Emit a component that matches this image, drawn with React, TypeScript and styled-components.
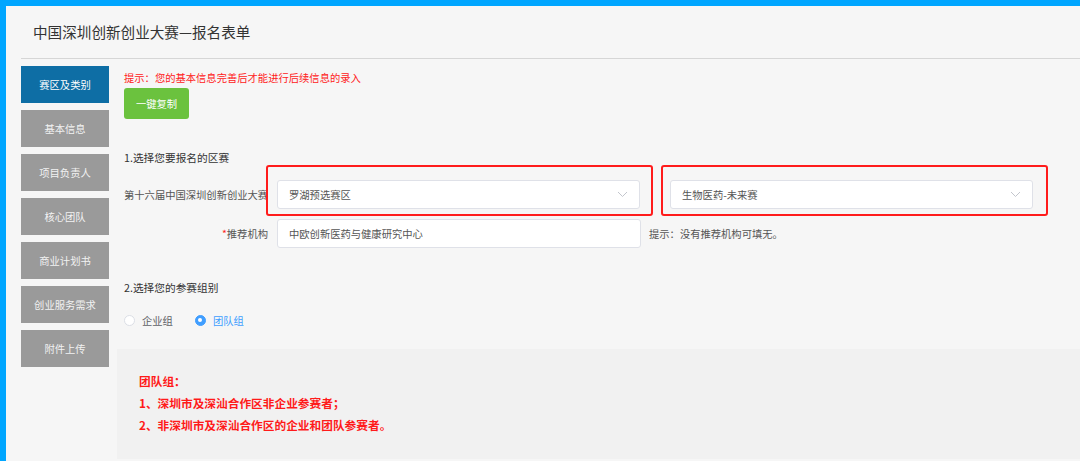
import React from "react";
import styled, { createGlobalStyle } from "styled-components";

const GlobalStyle = createGlobalStyle`
  html, body {
    margin: 0;
    padding: 0;
    background: #f6f6f6;
  }
  body {
    font-family: "Noto Sans CJK SC", "Noto Sans", "Liberation Sans", sans-serif;
  }
  * {
    box-sizing: border-box;
  }
`;

const Page = styled.div`
  width: 1080px;
  height: 461px;
  overflow: hidden;
  background: #f6f6f6;
  border-top: 6px solid #00a6ff;
  border-left: 6px solid #00a6ff;
`;

const Header = styled.div`
  height: 53px;
  margin-left: 15px;
  border-bottom: 1px solid #d6d6d6;
  display: flex;
  align-items: center;
  padding-left: 12px;
  padding-bottom: 1px;
`;

const Title = styled.h1`
  margin: 0;
  font-size: 14.6px;
  font-weight: 400;
  color: #333;
`;

const Body = styled.div`
  display: flex;
  padding-left: 15px;
  padding-top: 7px;
`;

const Sidebar = styled.nav`
  width: 88px;
  display: flex;
  flex-direction: column;
  gap: 7px;
  flex-shrink: 0;
`;

const SideItem = styled.div<{ $active?: boolean }>`
  height: 37px;
  display: flex;
  align-items: center;
  justify-content: center;
  font-size: 10.3px;
  color: ${(p) => (p.$active ? "#ffffff" : "#f2f2f2")};
  background: ${(p) => (p.$active ? "#0e6ea5" : "#9a9a9a")};
`;

const Main = styled.div`
  flex: 1;
  margin-left: 8px;
  display: flex;
  flex-direction: column;
`;

const Section = styled.div`
  padding-left: 7px;
  display: flex;
  flex-direction: column;
  align-items: flex-start;
`;

const Hint = styled.div`
  margin-top: 4px;
  font-size: 10.3px;
  line-height: 16px;
  color: #ff2020;
`;

const CopyButton = styled.button`
  margin-top: 2px;
  width: 65px;
  height: 31px;
  border: none;
  border-radius: 3px;
  background: #6bc23e;
  color: #fff;
  font-family: inherit;
  font-size: 10.3px;
  padding: 0;
`;

const StepTitle = styled.div<{ $top: number }>`
  margin-top: ${(p) => p.$top}px;
  font-size: 10.7px;
  line-height: 20px;
  color: #333;
`;

const Row = styled.div<{ $top: number }>`
  margin-top: ${(p) => p.$top}px;
  display: flex;
  align-items: center;
`;

const Label = styled.div`
  width: 153px;
  padding-right: 9px;
  text-align: right;
  font-size: 10.3px;
  color: #555;
  white-space: nowrap;
`;

const Star = styled.span`
  color: #ff2020;
`;

const Marked = styled.div<{ $right: number; $left: number }>`
  position: relative;
  &::after {
    content: "";
    position: absolute;
    top: -15px;
    bottom: -7px;
    left: -${(p) => p.$left}px;
    right: -${(p) => p.$right}px;
    border: 2.5px solid #ff1c1c;
    border-radius: 3px;
    pointer-events: none;
  }
`;

const Field = styled.div<{ $width: number }>`
  width: ${(p) => p.$width}px;
  height: 29px;
  background: #fff;
  border: 1px solid #dfe1e8;
  border-radius: 3px;
  display: flex;
  align-items: center;
  justify-content: space-between;
  padding: 0 11px 0 11px;
  font-size: 10.3px;
  color: #555;
`;

const Chevron = () => (
  <svg width="11" height="7" viewBox="0 0 11 7">
    <path d="M1 1l4.5 4.5L10 1" fill="none" stroke="#c3c6cd" strokeWidth="1" />
  </svg>
);

const Gap = styled.div<{ $w: number }>`
  width: ${(p) => p.$w}px;
`;

const Note = styled.div`
  margin-left: 8px;
  font-size: 10.3px;
  color: #555;
`;

const RadioGroup = styled.div`
  margin-top: 15px;
  display: flex;
  align-items: center;
  gap: 22px;
  height: 14px;
`;

const RadioOption = styled.label<{ $checked?: boolean }>`
  display: flex;
  align-items: center;
  gap: 7px;
  font-size: 10.3px;
  color: ${(p) => (p.$checked ? "#409eff" : "#606266")};
`;

const RadioDot = styled.span<{ $checked?: boolean }>`
  width: 11px;
  height: 11px;
  border-radius: 50%;
  background: ${(p) => (p.$checked ? "#409eff" : "#fff")};
  border: 1px solid ${(p) => (p.$checked ? "#409eff" : "#dcdfe6")};
  display: flex;
  align-items: center;
  justify-content: center;
  &::after {
    content: "";
    width: 4px;
    height: 4px;
    border-radius: 50%;
    background: #fff;
    display: ${(p) => (p.$checked ? "block" : "none")};
  }
`;

const InfoBox = styled.div`
  margin-top: 22px;
  height: 110px;
  background: #f1f1f1;
  padding: 21px 22px 0;
`;

const InfoLine = styled.div`
  font-size: 11.7px;
  line-height: 22px;
  font-weight: 700;
  color: #ff1a1a;
`;

const menu = [
  "赛区及类别",
  "基本信息",
  "项目负责人",
  "核心团队",
  "商业计划书",
  "创业服务需求",
  "附件上传",
];

export default function App() {
  return (
    <>
      <GlobalStyle />
      <Page>
        <Header>
          <Title>中国深圳创新创业大赛—报名表单</Title>
        </Header>
        <Body>
          <Sidebar>
            {menu.map((m, i) => (
              <SideItem key={m} $active={i === 0}>
                {m}
              </SideItem>
            ))}
          </Sidebar>
          <Main>
            <Section>
              <Hint>提示：您的基本信息完善后才能进行后续信息的录入</Hint>
              <CopyButton>一键复制</CopyButton>
              <StepTitle $top={29}>1.选择您要报名的区赛</StepTitle>
              <Row $top={12}>
                <Label>第十六届中国深圳创新创业大赛</Label>
                <Marked $left={11} $right={13}>
                  <Field $width={363}>
                    罗湖预选赛区
                    <Chevron />
                  </Field>
                </Marked>
                <Gap $w={30} />
                <Marked $left={9} $right={15}>
                  <Field $width={363}>
                    生物医药-未来赛
                    <Chevron />
                  </Field>
                </Marked>
              </Row>
              <Row $top={10}>
                <Label>
                  <Star>*</Star>推荐机构
                </Label>
                <Field $width={364}>中欧创新医药与健康研究中心</Field>
                <Note>提示：没有推荐机构可填无。</Note>
              </Row>
              <StepTitle $top={30}>2.选择您的参赛组别</StepTitle>
              <RadioGroup>
                <RadioOption>
                  <RadioDot />
                  企业组
                </RadioOption>
                <RadioOption $checked>
                  <RadioDot $checked />
                  团队组
                </RadioOption>
              </RadioGroup>
            </Section>
            <InfoBox>
              <InfoLine>团队组：</InfoLine>
              <InfoLine>1、深圳市及深汕合作区非企业参赛者；</InfoLine>
              <InfoLine>2、非深圳市及深汕合作区的企业和团队参赛者。</InfoLine>
            </InfoBox>
          </Main>
        </Body>
      </Page>
    </>
  );
}
